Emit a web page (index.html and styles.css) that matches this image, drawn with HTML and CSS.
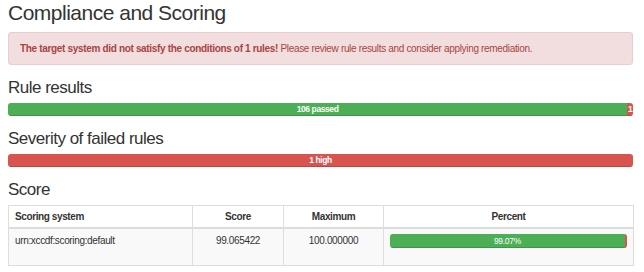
FILE: index.html
```html
<html>
    <head>
        <link rel="stylesheet" href="styles.css">
    </head>
    <body>
        <div class="report">
            <h2 class="title">Compliance and Scoring</h2>
            <div class="alert">
                <strong>The target system did not satisfy the conditions of 1 rules!</strong> Please review rule results and consider applying remediation.
            </div>

            <h3>Rule results</h3>
            <div class="progress">
                <div class="bar bar-pass" style="width: 99.0654%">106 passed</div>
                <div class="bar bar-fail" style="width: 0.9346%">1</div>
            </div>

            <h3>Severity of failed rules</h3>
            <div class="progress">
                <div class="bar bar-fail" style="width: 100%">1 high</div>
            </div>

            <h3>Score</h3>
            <table class="score">
                <colgroup>
                    <col class="col-system">
                    <col class="col-score">
                    <col class="col-max">
                    <col class="col-percent">
                </colgroup>
                <thead>
                    <tr>
                        <th class="left">Scoring system</th>
                        <th>Score</th>
                        <th>Maximum</th>
                        <th>Percent</th>
                    </tr>
                </thead>
                <tbody>
                    <tr>
                        <td class="left">urn:xccdf:scoring:default</td>
                        <td>99.065422</td>
                        <td>100.000000</td>
                        <td>
                            <div class="progress progress-cell">
                                <div class="bar bar-pass bar-light" style="width: 99.07%">99.07%</div>
                                <div class="bar bar-fail" style="width: 0.93%"></div>
                            </div>
                        </td>
                    </tr>
                </tbody>
            </table>
        </div>
    </body>
</html>
```

FILE: styles.css
```css
body{
    margin: 0;
    padding: 0;
    font-family: "Liberation Sans", Arial, sans-serif;
    color: #333;
    background: #fff;
}
.report{
    width: 625px;
    margin-left: 8px;
}
.title{
    font-size: 21px;
    font-weight: normal;
    letter-spacing: -0.5px;
    line-height: 26px;
    margin: 0 0 6px 0;
}
h3{
    font-size: 17px;
    font-weight: normal;
    letter-spacing: -0.5px;
    line-height: 19px;
    margin: 13px 0 6px 0;
}
.alert{
    background-color: #f2dede;
    border: 1px solid #ebccd1;
    border-radius: 3px;
    color: #a94442;
    font-size: 10px;
    letter-spacing: -0.33px;
    line-height: 15px;
    padding: 8px 11px;
}

.progress{
    display: flex;
    height: 13px;
    border-radius: 3px;
    overflow: hidden;
    background-color: #f5f5f5;
}
.bar{
    height: 100%;
    color: #fff;
    font-size: 8.5px;
    font-weight: bold;
    letter-spacing: -0.4px;
    line-height: 13px;
    text-align: center;
    white-space: nowrap;
    box-shadow: inset 0 -1px 0 rgba(0,0,0,.15);
}
.bar-pass{
    background-color: #4cae55;
}
.bar-fail{
    background-color: #d9534f;
}
.bar-light{
    font-weight: normal;
    letter-spacing: -0.3px;
}

.score{
    width: 625px;
    margin-top: 3px;
    border-collapse: collapse;
    table-layout: fixed;
    font-size: 10px;
    letter-spacing: -0.35px;
    line-height: 15px;
}
.col-system{ width: 184px; }
.col-score{ width: 91px; }
.col-max{ width: 100px; }
.col-percent{ width: 250px; }
.score th, .score td{
    border: 1px solid #ddd;
    padding: 4px 6px;
    text-align: center;
    vertical-align: top;
}
.score th{
    padding: 3px 6px;
    border-bottom-width: 2px;
    font-weight: bold;
    letter-spacing: -0.4px;
}
.score th.left, .score td.left{
    text-align: left;
}
.score tbody tr{
    background-color: #f9f9f9;
}
.progress-cell{
    height: 14px;
    margin: 1px 0 13px 0;
}
.progress-cell .bar{
    line-height: 14px;
}
```
